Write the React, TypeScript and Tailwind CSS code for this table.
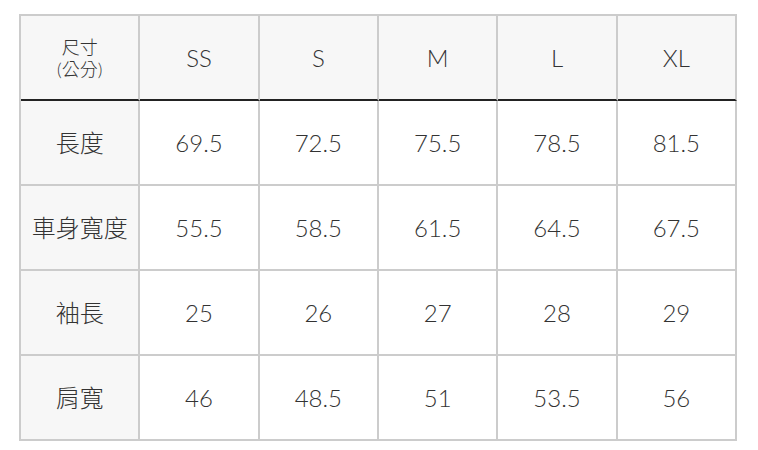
const sizes = ["SS", "S", "M", "L", "XL"];

const rows: { label: string; values: string[] }[] = [
  { label: "長度", values: ["69.5", "72.5", "75.5", "78.5", "81.5"] },
  { label: "車身寬度", values: ["55.5", "58.5", "61.5", "64.5", "67.5"] },
  { label: "袖長", values: ["25", "26", "27", "28", "29"] },
  { label: "肩寬", values: ["46", "48.5", "51", "53.5", "56"] },
];

const font = "font-['Lato','Noto_Sans_CJK_TC',sans-serif]";

export default function App() {
  return (
    <div className={`w-[758px] h-[450px] bg-white pt-[14px] pl-[19px] text-[#333] font-light ${font}`}>
      <div className="grid grid-cols-6 w-[718px] border-l-2 border-t-2 border-[#cccccc]">
        {/* Header */}
        <div className="h-[85px] flex flex-col items-center justify-center bg-[#f7f7f7] border-r-2 border-r-[#cccccc] border-b-2 border-b-[#222] text-[18px] leading-[22px]">
          <span>尺寸</span>
          <span>(公分)</span>
        </div>
        {sizes.map((s) => (
          <div
            key={s}
            className="h-[85px] flex items-center justify-center bg-[#f7f7f7] border-r-2 border-r-[#cccccc] border-b-2 border-b-[#222] text-[24px]"
          >
            {s}
          </div>
        ))}

        {/* Body */}
        {rows.map((row) => (
          <>
            <div
              key={row.label}
              className="h-[85px] flex items-center justify-center bg-[#f7f7f7] border-r-2 border-b-2 border-[#cccccc] text-[24px]"
            >
              {row.label}
            </div>
            {row.values.map((v, i) => (
              <div
                key={row.label + i}
                className="h-[85px] flex items-center justify-center bg-white border-r-2 border-b-2 border-[#cccccc] text-[24px]"
              >
                {v}
              </div>
            ))}
          </>
        ))}
      </div>
    </div>
  );
}
